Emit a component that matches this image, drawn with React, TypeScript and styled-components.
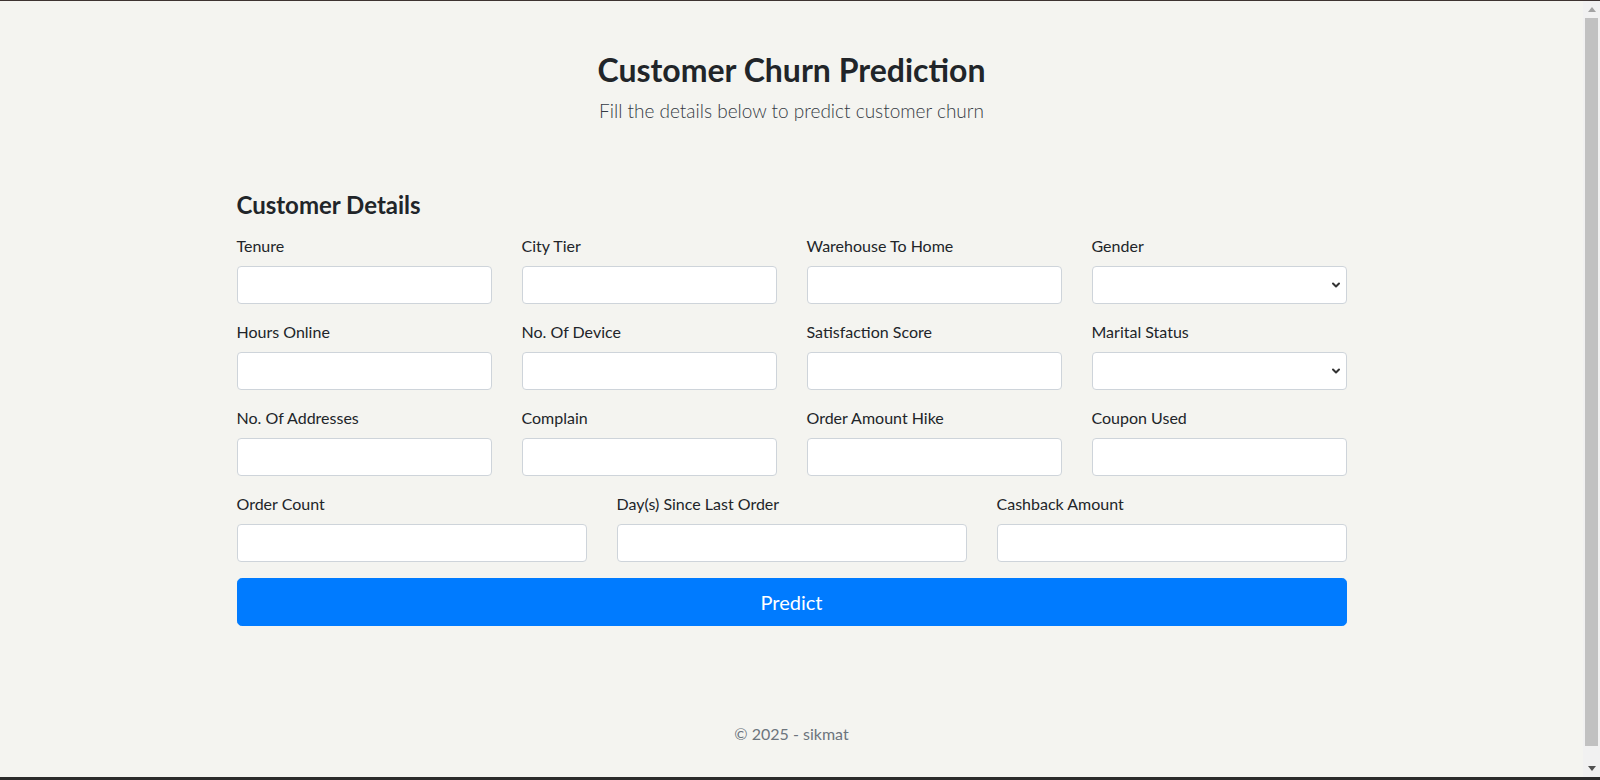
import { ChevronDown } from "lucide-react";
import styled, { createGlobalStyle } from "styled-components";

const fields: { label: string; type?: "select" }[][] = [
  [
    { label: "Tenure" },
    { label: "City Tier" },
    { label: "Warehouse To Home" },
    { label: "Gender", type: "select" },
  ],
  [
    { label: "Hours Online" },
    { label: "No. Of Device" },
    { label: "Satisfaction Score" },
    { label: "Marital Status", type: "select" },
  ],
  [
    { label: "No. Of Addresses" },
    { label: "Complain" },
    { label: "Order Amount Hike" },
    { label: "Coupon Used" },
  ],
  [
    { label: "Order Count" },
    { label: "Day(s) Since Last Order" },
    { label: "Cashback Amount" },
  ],
];

const App = () => {
  return (
    <>
      <GlobalStyle />
      <Frame>
        <TopEdge />
        <Viewport>
          <Page>
            <Header>
              <Title>Customer Churn Prediction</Title>
              <Lead>Fill the details below to predict customer churn</Lead>
            </Header>
            <Container>
              <SectionTitle>Customer Details</SectionTitle>
              {fields.map((row, i) => (
                <FormRow key={i} cols={row.length}>
                  {row.map((f) => (
                    <Group key={f.label}>
                      <Label>{f.label}</Label>
                      {f.type === "select" ? (
                        <SelectWrap>
                          <Select defaultValue="">
                            <option value="" />
                          </Select>
                          <Chevron>
                            <ChevronDown size={12} strokeWidth={4} />
                          </Chevron>
                        </SelectWrap>
                      ) : (
                        <Input type="text" />
                      )}
                    </Group>
                  ))}
                </FormRow>
              ))}
              <PredictButton type="button">Predict</PredictButton>
            </Container>
            <Footer>© 2025 - sikmat</Footer>
          </Page>
          <Scrollbar>
            <ScrollButton>
              <svg width="8" height="5" viewBox="0 0 8 5">
                <path d="M0 5 L4 0 L8 5 Z" fill="#a3a3a3" />
              </svg>
            </ScrollButton>
            <Thumb />
            <ScrollButton>
              <svg width="8" height="5" viewBox="0 0 8 5">
                <path d="M0 0 L8 0 L4 5 Z" fill="#505050" />
              </svg>
            </ScrollButton>
          </Scrollbar>
        </Viewport>
        <BottomEdge />
      </Frame>
    </>
  );
};

const GlobalStyle = createGlobalStyle`
  html, body {
    margin: 0;
    height: 100%;
    overflow: hidden;
  }
  body {
    font-family: Lato, "Liberation Sans", sans-serif;
    color: #212529;
    background: #f4f4f0;
  }
  * {
    box-sizing: border-box;
  }
`;

const Frame = styled.div`
  height: 100vh;
  display: flex;
  flex-direction: column;
`;

const TopEdge = styled.div`
  height: 1px;
  background: #3d3331;
`;

const BottomEdge = styled.div`
  height: 3px;
  background: #2b2b2b;
`;

const Viewport = styled.div`
  flex: 1;
  display: flex;
  min-height: 0;
`;

const Page = styled.div`
  flex: 1;
  background: #f4f4f0;
`;

const Scrollbar = styled.div`
  width: 17px;
  background: #f1f1f1;
  display: flex;
  flex-direction: column;
  align-items: center;
`;

const ScrollButton = styled.div`
  height: 17px;
  width: 100%;
  display: flex;
  align-items: center;
  justify-content: center;
`;

const Thumb = styled.div`
  flex: 1;
  width: 13px;
  margin: 0 0 14px;
  background: #c1c1c1;
`;

const Header = styled.header`
  padding-top: 50px;
  text-align: center;
`;

const Title = styled.h1`
  margin: 0;
  font-size: 32px;
  font-weight: 700;
  line-height: 1.2;
  color: #212529;
`;

const Lead = styled.p`
  margin: 8px 0 0;
  font-size: 19px;
  font-weight: 300;
  line-height: 1.5;
  color: #353b44;
`;

const Container = styled.main`
  max-width: 1140px;
  margin: 65px auto 0;
  padding: 0 15px;
`;

const SectionTitle = styled.h4`
  margin: 0 0 14px;
  font-size: 24px;
  font-weight: 700;
  line-height: 1.2;
`;

const FormRow = styled.div<{ cols: number }>`
  display: grid;
  grid-template-columns: repeat(${({ cols }) => cols}, 1fr);
  column-gap: 30px;
`;

const Group = styled.div`
  margin-bottom: 16px;
`;

const Label = styled.label`
  display: block;
  margin-bottom: 8px;
  font-size: 16px;
  line-height: 1.5;
`;

const Input = styled.input`
  display: block;
  width: 100%;
  height: 38px;
  padding: 6px 12px;
  font: inherit;
  background: #fff;
  border: 1px solid #ced4da;
  border-radius: 4px;
  outline: none;
`;

const SelectWrap = styled.div`
  position: relative;
`;

const Select = styled.select`
  display: block;
  width: 100%;
  height: 38px;
  padding: 6px 12px;
  font: inherit;
  background: #fff;
  border: 1px solid #ced4da;
  border-radius: 4px;
  appearance: none;
  outline: none;
`;

const Chevron = styled.span`
  position: absolute;
  right: 5px;
  top: 13px;
  display: flex;
  color: #333;
  pointer-events: none;
`;

const PredictButton = styled.button`
  display: block;
  width: 100%;
  height: 48px;
  padding: 8px 16px;
  font-family: inherit;
  font-size: 20px;
  line-height: 1.5;
  color: #fff;
  background: #007bff;
  border: 1px solid #007bff;
  border-radius: 4.8px;
  cursor: pointer;
`;

const Footer = styled.footer`
  margin-top: 96px;
  text-align: center;
  font-size: 16px;
  line-height: 1.5;
  color: #6c757d;
`;

export default App;
